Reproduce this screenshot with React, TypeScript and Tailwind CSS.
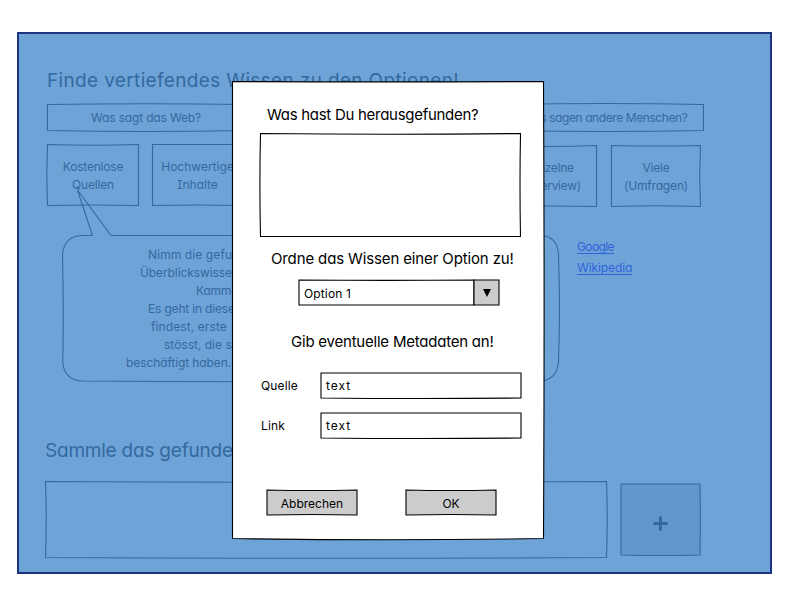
import type { ReactNode } from "react";

type Bow = [number, number, number, number];

interface SketchBoxProps {
  w: number;
  h: number;
  bow?: Bow;
  inset?: number;
  stroke?: string;
  fill?: string;
  className?: string;
  children?: ReactNode;
}

// A box whose four edges are slightly bent, as if drawn by hand.
// bow: how far the top, right, bottom and left edges bend (px, +x / +y).
// inset: distance of the stroke's centre from the box edge; 1 gives a softer line than 0.5.
function SketchBox({ w, h, bow = [0, 0, 0, 0], inset = 0.5, stroke = "#000", fill = "none", className = "", children }: SketchBoxProps) {
  const [t, r, b, l] = bow;
  const A = inset;
  const R = w - inset;
  const B = h - inset;
  const d = `M${A} ${A}Q${w / 2} ${A + t * 2} ${R} ${A}Q${R + r * 2} ${h / 2} ${R} ${B}Q${w / 2} ${B + b * 2} ${A} ${B}Q${A + l * 2} ${h / 2} ${A} ${A}Z`;
  return (
    <div className={`relative shrink-0 ${className}`} style={{ width: w, height: h }}>
      <svg className="absolute inset-0 overflow-visible" width={w} height={h} aria-hidden="true">
        <path d={d} fill={fill} stroke={stroke} strokeWidth="1.1" />
      </svg>
      <div className="relative h-full">{children}</div>
    </div>
  );
}

const INK = "#33699f";

function Tile({ w, h, bow, lines, className = "" }: { w: number; h: number; bow: Bow; lines: string[]; className?: string }) {
  return (
    <SketchBox w={w} h={h} bow={bow} stroke={INK} className={className}>
      <div className="flex h-full flex-col items-center justify-center whitespace-nowrap pt-px text-center leading-[18px]">
        {lines.map((line) => (
          <span key={line}>{line}</span>
        ))}
      </div>
    </SketchBox>
  );
}

function SpeechBubble() {
  return (
    <div className="relative h-[147px] w-[498px] shrink-0">
      <svg className="absolute inset-0 overflow-visible" width="498" height="147" aria-hidden="true">
        <path
          d="M30.500 .5L15.500 -45L49 .5L250 .5L478 .5Q496 1 496.500 20Q498.500 73 496.500 127Q495 145 478 146Q250 147.500 20 146Q2 145 .8 127Q1.800 73 .5 20Q2 1 20 .5H30.500"
          fill="none"
          stroke={INK}
          strokeWidth="1.1"
        />
      </svg>
      <div className="relative flex flex-col whitespace-nowrap pt-[11px] leading-[18px]">
        <span className="pl-[86px] tracking-[0.1px]">Nimm die gefundenen</span>
        <span className="pl-[78px] tracking-[-0.1px]">Überblickswissen</span>
        <span className="pl-[134px] tracking-[-0.2px]">Kammer</span>
        <span className="pl-[86px] tracking-[-0.18px]">Es geht in dieser</span>
        <span className="pl-[89px] tracking-[0.1px]">findest, erste</span>
        <span className="pl-[102px]">stösst, die sich</span>
        <span className="pl-[64px] tracking-[-0.1px]">beschäftigt haben.</span>
      </div>
    </div>
  );
}

function Background() {
  return (
    <div className="flex h-[542px] w-[755px] flex-col border-2 border-[#1c3380] bg-[#6ea3d8] text-[#33699f]">
      <h1 className="ml-[28px] mt-[31px] h-[30px] whitespace-nowrap pt-px text-[19px] leading-[30px] tracking-[0.35px]">
        Finde vertiefendes Wissen zu den Optionen!
      </h1>

      <div className="ml-[28px] mt-[9px] flex">
        <Tile w={198} h={27} bow={[-0.8, 0, 1, 0]} lines={["Was sagt das Web?"]} className="tracking-[-0.16px]" />
        <Tile w={198} h={27} bow={[-1, 0, 1, 0]} lines={["Was sagen andere Menschen?"]} className="ml-[261px] tracking-[-0.42px]" />
      </div>

      <div className="ml-[28px] mt-[13px] flex">
        <Tile w={92} h={62} bow={[0.8, 0, -0.5, -0.7]} lines={["Kostenlose", "Quellen"]} className="tracking-[-0.2px]" />
        <Tile w={91} h={62} bow={[0, 0, -0.5, 0]} lines={["Hochwertige", "Inhalte"]} className="ml-[13px]" />
        <Tile w={92} h={62} bow={[1, 0, -0.5, 0]} lines={["Einzelne", "(Interview)"]} className="ml-[262px] mt-px tracking-[-0.3px]" />
        <Tile w={90} h={62} bow={[0.5, -0.8, -0.8, 0]} lines={["Viele", "(Umfragen)"]} className="ml-[14px] mt-px tracking-[-0.17px]" />
      </div>

      <div className="ml-[43px] mt-[28px] flex">
        <SpeechBubble />
        <div className="ml-[17px] mt-[4px] flex flex-col items-start gap-[6px] leading-[14px] text-[#2f63d9]">
          <a className="border-b border-[#2f63d9] pt-px leading-[13px] tracking-[-0.6px]">Google</a>
          <a className="border-b border-[#2f63d9] pt-px leading-[13px] tracking-[-0.1px]">Wikipedia</a>
        </div>
      </div>

      <h2 className="ml-[26px] mt-[54px] h-[30px] whitespace-nowrap text-[19px] leading-[30px] tracking-[-0.22px]">
        Sammle das gefundene Wissen!
      </h2>

      <div className="ml-[26px] mt-[15px] flex">
        <SketchBox w={562} h={77} bow={[0.8, 0.7, 0.8, 0.7]} stroke={INK} />
        <SketchBox w={81} h={73} bow={[0, 0.3, 0.5, 0]} inset={1} stroke={INK} fill="#6297cb" className="ml-[13px] mt-[2px]">
          <div className="flex h-full items-center justify-center pt-[7px]">
            <svg width="15" height="15" viewBox="0 0 15 15" stroke={INK} strokeWidth="3" strokeLinecap="round" aria-hidden="true">
              <path d="M1.500 7.500H13.500M7.500 1.500V13.500" />
            </svg>
          </div>
        </SketchBox>
      </div>
    </div>
  );
}

function Field({ label }: { label: string }) {
  return (
    <div className="flex h-[27px] items-center">
      <label className="w-[59px] tracking-[0.15px]">{label}</label>
      <SketchBox w={202} h={27} inset={1} bow={[0, 0, 0.5, 0]}>
        <div className="flex h-full items-center pl-[6px] tracking-[0.94px]">text</div>
      </SketchBox>
    </div>
  );
}

function Dialog() {
  return (
    <div className="absolute left-[232px] top-[81px]">
      <SketchBox w={312} h={458} bow={[0.4, 0.6, 1.3, 0]} fill="#fff">
        <div className="flex flex-col whitespace-nowrap text-black">
          <p className="ml-[35px] mt-[23px] text-[15px] leading-[22px] tracking-[-0.28px]">Was hast Du herausgefunden?</p>
          <SketchBox w={261} h={104} bow={[0.7, -0.5, 0, -0.6]} className="ml-[28px] mt-[7px]" />
          <p className="ml-[39px] mt-[11px] text-[15px] leading-[22px] tracking-[-0.13px]">Ordne das Wissen einer Option zu!</p>
          <div className="ml-[66px] mt-[9px] flex">
            <SketchBox w={177} h={27} inset={1} bow={[0.4, 0, 0, 0]}>
              <div className="flex h-full items-center pl-[6px] pt-[2px] tracking-[0.14px]">Option 1</div>
            </SketchBox>
            <SketchBox w={27} h={27} inset={1} fill="#ccc" className="-ml-[2px]">
              <div className="flex h-full items-center justify-center">
                <svg width="8" height="8" viewBox="0 0 8 8" aria-hidden="true">
                  <path d="M0 0H8L4 8Z" fill="#000" />
                </svg>
              </div>
            </SketchBox>
          </div>
          <p className="ml-[59px] mt-[25px] text-[15px] leading-[22px] tracking-[-0.22px]">Gib eventuelle Metadaten an!</p>
          <div className="ml-[29px] mt-[19px] flex flex-col gap-[13px]">
            <Field label="Quelle" />
            <Field label="Link" />
          </div>
          <div className="ml-[34px] mt-[50px] flex gap-[47px]">
            <SketchBox w={92} h={27} inset={1} bow={[0.5, 0, -0.5, 0]} fill="#ccc">
              <div className="flex h-full items-center justify-center pt-[2px]">Abbrechen</div>
            </SketchBox>
            <SketchBox w={92} h={27} inset={1} bow={[0.5, 0, -0.5, 0]} fill="#ccc">
              <div className="flex h-full items-center justify-center pt-[2px]">OK</div>
            </SketchBox>
          </div>
        </div>
      </SketchBox>
    </div>
  );
}

export default function App() {
  return (
    <div className="relative h-[600px] w-[800px] overflow-hidden bg-white pl-[17px] pt-[32px] font-['Inter','Open_Sans',sans-serif] text-[12px] [font-feature-settings:'cv11','cv08']">
      <Background />
      <Dialog />
    </div>
  );
}
